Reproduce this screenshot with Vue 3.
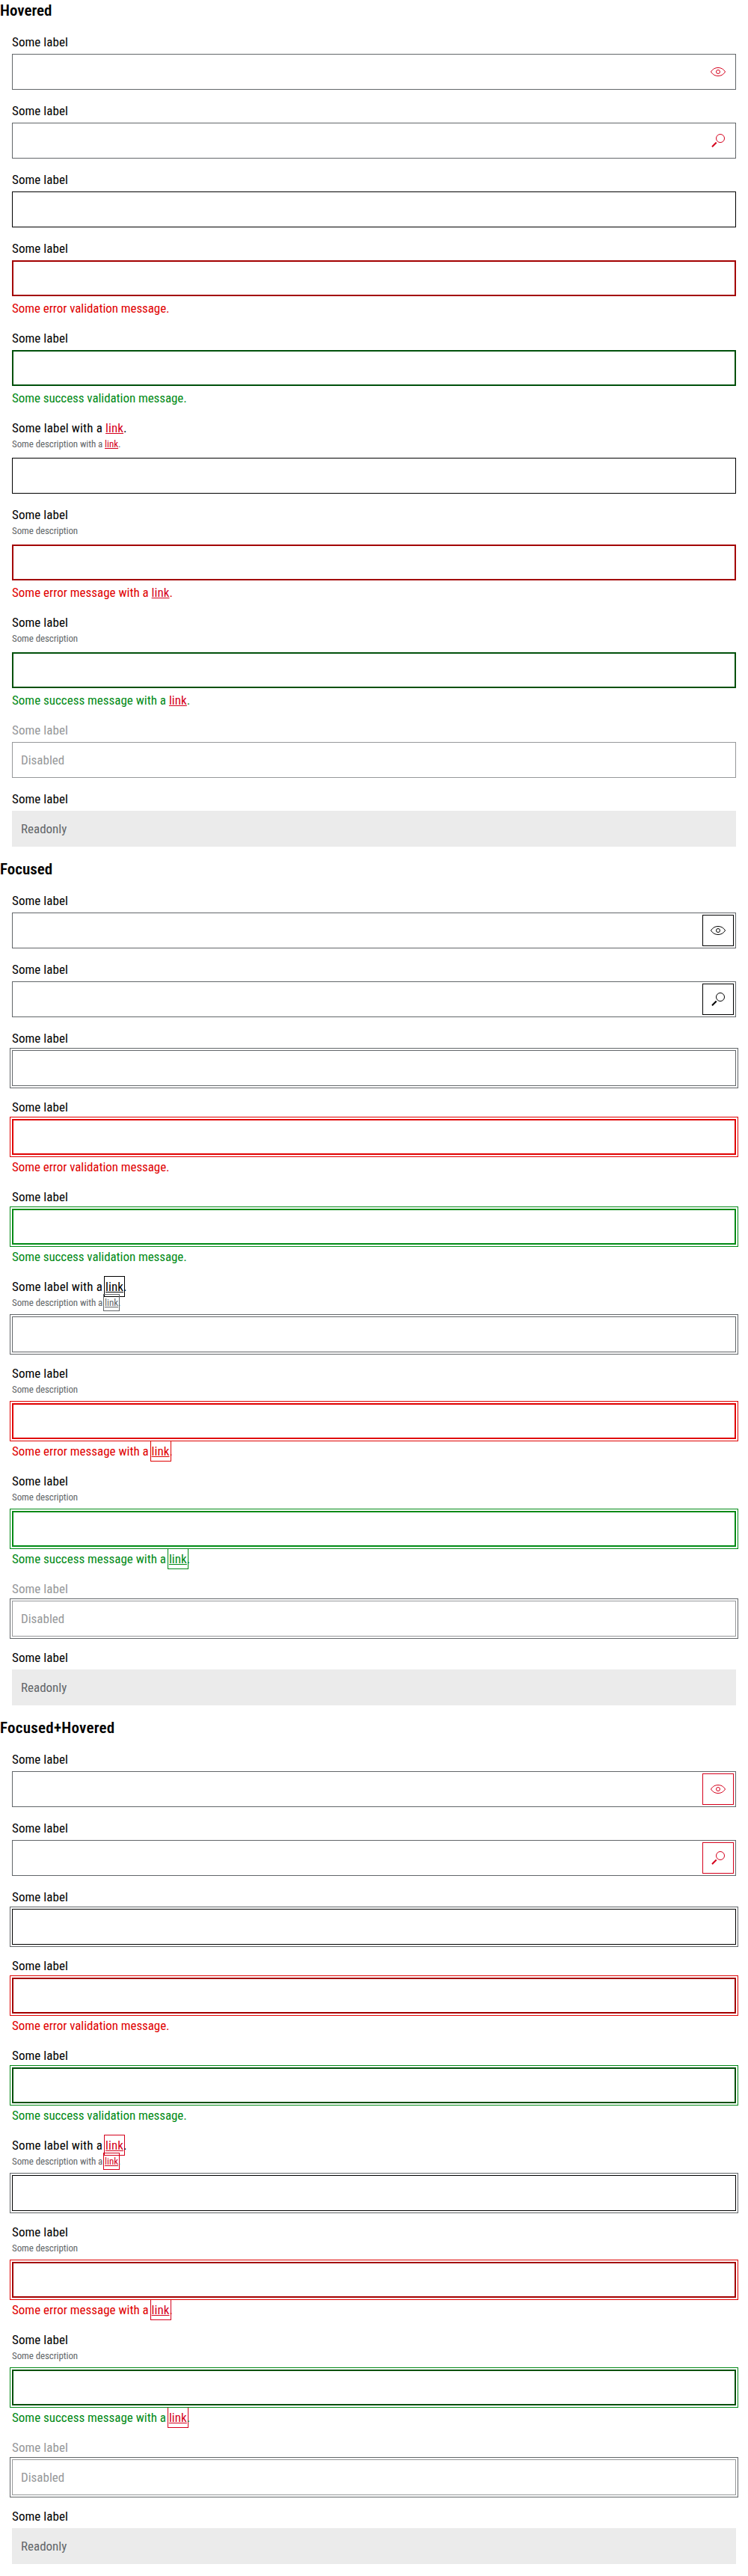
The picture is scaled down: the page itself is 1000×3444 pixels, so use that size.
<script setup>
const E = 'error'
const S = 'success'
const fields = [
  { label: 'Some label', icon: 'eye' },
  { label: 'Some label', icon: 'search' },
  { label: 'Some label' },
  { label: 'Some label', state: E, msg: 'Some error validation message.' },
  { label: 'Some label', state: S, msg: 'Some success validation message.' },
  { label: 'Some label with a', labelLink: true, desc: 'Some description with a', descLink: true },
  { label: 'Some label', desc: 'Some description', state: E, msg: 'Some error message with a', msgLink: true },
  { label: 'Some label', desc: 'Some description', state: S, msg: 'Some success message with a', msgLink: true },
  { label: 'Some label', state: 'disabled', value: 'Disabled' },
  { label: 'Some label', state: 'readonly', value: 'Readonly' },
]
const sections = [
  { title: 'Hovered', cls: 'hovered' },
  { title: 'Focused', cls: 'focused' },
  { title: 'Focused+Hovered', cls: 'focused hovered' },
]
</script>

<template>
  <main>
    <section v-for="s in sections" :key="s.title" :class="s.cls">
      <h2 :class="{ combined: s.title.includes('+') }">{{ s.title }}</h2>
      <div v-for="(f, i) in fields" :key="i" class="field" :class="[f.state, { 'has-icon': f.icon }]">
        <div class="label" :class="{ linked: f.labelLink }">{{ f.label }}<template v-if="f.labelLink">&nbsp;<a>link</a>.</template></div>
        <div v-if="f.desc" class="desc">{{ f.desc }}<template v-if="f.descLink">&nbsp;<a>link</a>.</template></div>
        <div class="input">
          <span v-if="f.value">{{ f.value }}</span>
          <button v-if="f.icon" type="button">
            <svg v-if="f.icon === 'eye'" width="24" height="24" viewBox="0 0 24 24">
              <path d="M2.400 12C5 8.200 8 6.500 12 6.500S19 8.200 21.600 12C19 15.800 16 17.500 12 17.500S5 15.800 2.400 12Z" />
              <circle cx="12" cy="12" r="2.500" />
            </svg>
            <svg v-else width="24" height="24" viewBox="0 0 24 24">
              <circle cx="15" cy="9" r="5.500" />
              <path class="handle" d="M4 20.200L9.700 14.500" />
            </svg>
          </button>
        </div>
        <div v-if="f.msg" class="msg" :class="{ linked: f.msgLink }">{{ f.msg }}<template v-if="f.msgLink">&nbsp;<a>link</a>.</template></div>
      </div>
    </section>
  </main>
</template>

<style>
body {
  background: #fff;
}
</style>

<style scoped>
main {
  color: #000;
  font: 17px/24px Roboto, "Liberation Sans", sans-serif;
  font-stretch: 75%;
}
section {
  padding-bottom: 16px;
}
h2 {
  margin: 0;
  font-size: 21px;
  line-height: 28px;
  font-weight: 600;
}
h2.combined {
  letter-spacing: 0.250px;
}
.field {
  padding: 16px 16px 0;
}
.label,
.msg {
  height: 24px;
  white-space: nowrap;
}
.label {
  letter-spacing: 0.060px;
}
.label.linked {
  letter-spacing: 0.150px;
}
.desc {
  height: 20px;
  margin-bottom: 8px;
  font-size: 13px;
  line-height: 19px;
  letter-spacing: -0.100px;
  color: #626669;
  white-space: nowrap;
}
.label + .input {
  margin-top: 4px;
}
.input {
  display: flex;
  align-items: center;
  justify-content: space-between;
  box-sizing: border-box;
  height: 48px;
  padding-left: 11px;
  border: 1px solid #626669;
}
.msg {
  margin-top: 4px;
  letter-spacing: -0.060px;
}
.msg.linked {
  letter-spacing: 0;
}
a {
  display: inline-block;
  color: inherit;
  letter-spacing: 0.060px;
  text-decoration: underline;
  text-decoration-thickness: 1px;
  text-decoration-skip-ink: none;
  text-underline-offset: 1px;
}
.desc a {
  letter-spacing: 0;
}
button {
  display: flex;
  margin: 0 3px 0 auto;
  padding: 8px;
  border: 0;
  background: none;
  color: #000;
}
svg {
  fill: none;
  stroke: currentColor;
  stroke-width: 1;
}
.handle {
  stroke-width: 2;
}
.error .input {
  border: 2px solid #e00000;
}
.success .input {
  border: 2px solid #018a16;
}
.error .msg {
  color: #e00000;
}
.success .msg {
  color: #018a16;
}
.hovered .input {
  border-color: #000;
}
.hovered .has-icon .input {
  border-color: #626669;
}
.hovered .error .input {
  border-color: #a30000;
}
.hovered .success .input {
  border-color: #00500b;
}
.hovered a,
.hovered button {
  color: #d5001c;
}
.focused .input {
  outline: 1px solid #626669;
  outline-offset: 2px;
}
.focused .error .input {
  outline-color: #e00000;
}
.focused .success .input {
  outline-color: #018a16;
}
.focused a {
  outline: 1px solid currentColor;
  outline-offset: 1px;
}
.focused button {
  outline: 1px solid currentColor;
}
.disabled .label,
.disabled .input {
  color: #96989a;
}
.disabled .input,
.hovered .disabled .input {
  border-color: #96989a;
}
.readonly .input,
.hovered .readonly .input {
  border-color: #ebebeb;
  background: #ebebeb;
  color: #626669;
}
.focused .has-icon .input,
.focused .readonly .input {
  outline: none;
}
</style>
